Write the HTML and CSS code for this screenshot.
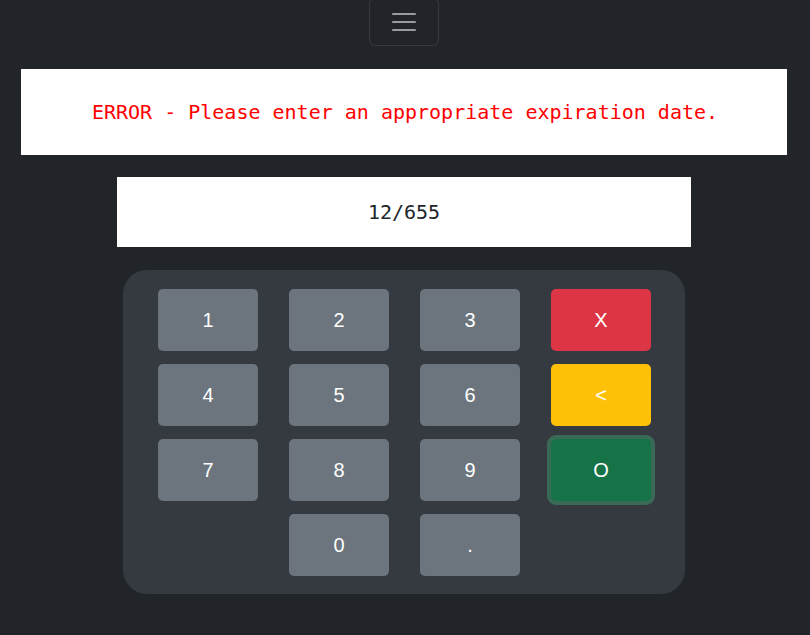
FILE: index.html
```html
<!DOCTYPE html>
<html>
<head>
<meta charset="utf-8">
<link rel="stylesheet" href="styles.css">
</head>
<body>
<div class="page">
  <div class="nav">
    <button class="toggler" aria-label="menu">
      <svg width="30" height="30" viewBox="0 0 30 30"><path d="M4 7h22M4 15h22M4 23h22" stroke="rgba(255,255,255,0.55)" stroke-width="2" stroke-linecap="round" fill="none"/></svg>
    </button>
  </div>
  <div class="error">ERROR - Please enter an appropriate expiration date.</div>
  <div class="display">12/655</div>
  <div class="keypad">
    <button class="key">1</button>
    <button class="key">2</button>
    <button class="key">3</button>
    <button class="key red">X</button>
    <button class="key">4</button>
    <button class="key">5</button>
    <button class="key">6</button>
    <button class="key yellow">&lt;</button>
    <button class="key">7</button>
    <button class="key">8</button>
    <button class="key">9</button>
    <button class="key green">O</button>
    <span class="blank"></span>
    <button class="key">0</button>
    <button class="key">.</button>
  </div>
</div>
</body>
</html>
```
FILE: styles.css
```css
html, body {
  margin: 0;
  padding: 0;
  background: #212529;
  height: 100%;
}
.page {
  width: 808px;
  display: flex;
  flex-direction: column;
  align-items: center;
  font-family: "Liberation Sans", Arial, sans-serif;
}
.nav {
  display: flex;
  justify-content: center;
  height: 46px;
}
.toggler {
  margin-top: -2px;
  width: 70px;
  height: 48px;
  background: transparent;
  border: 1px solid rgba(255,255,255,0.1);
  border-radius: 6px;
  display: flex;
  align-items: center;
  justify-content: center;
  padding: 0;
}
.toggler svg { display: block; }
.error {
  margin-top: 23px;
  width: 766px;
  height: 86px;
  background: #fff;
  color: #ff0000;
  font-family: "DejaVu Sans Mono", monospace;
  font-size: 20px;
  display: flex;
  align-items: center;
  justify-content: center;
  padding-left: 2px;
  box-sizing: border-box;
}
.display {
  margin-top: 22px;
  width: 574px;
  height: 70px;
  background: #fff;
  color: #212529;
  font-family: "DejaVu Sans Mono", monospace;
  font-size: 20px;
  display: flex;
  align-items: center;
  justify-content: center;
}
.keypad {
  margin-top: 23px;
  width: 562px;
  box-sizing: border-box;
  padding: 19px 35px 18px 35px;
  background: #343a40;
  border-radius: 24px;
  display: grid;
  grid-template-columns: repeat(4, 100px);
  grid-auto-rows: 62px;
  column-gap: 31px;
  row-gap: 13px;
}
.key {
  border: none;
  border-radius: 5px;
  background: #6c757d;
  color: #fff;
  font-family: "Liberation Sans", Arial, sans-serif;
  font-size: 20px;
  padding: 0;
  display: flex;
  align-items: center;
  justify-content: center;
}
.red { background: #dc3545; }
.yellow { background: #ffc107; }
.green {
  background: #157347;
  box-shadow: 0 0 0 4px rgba(60,153,110,0.5);
}
```
